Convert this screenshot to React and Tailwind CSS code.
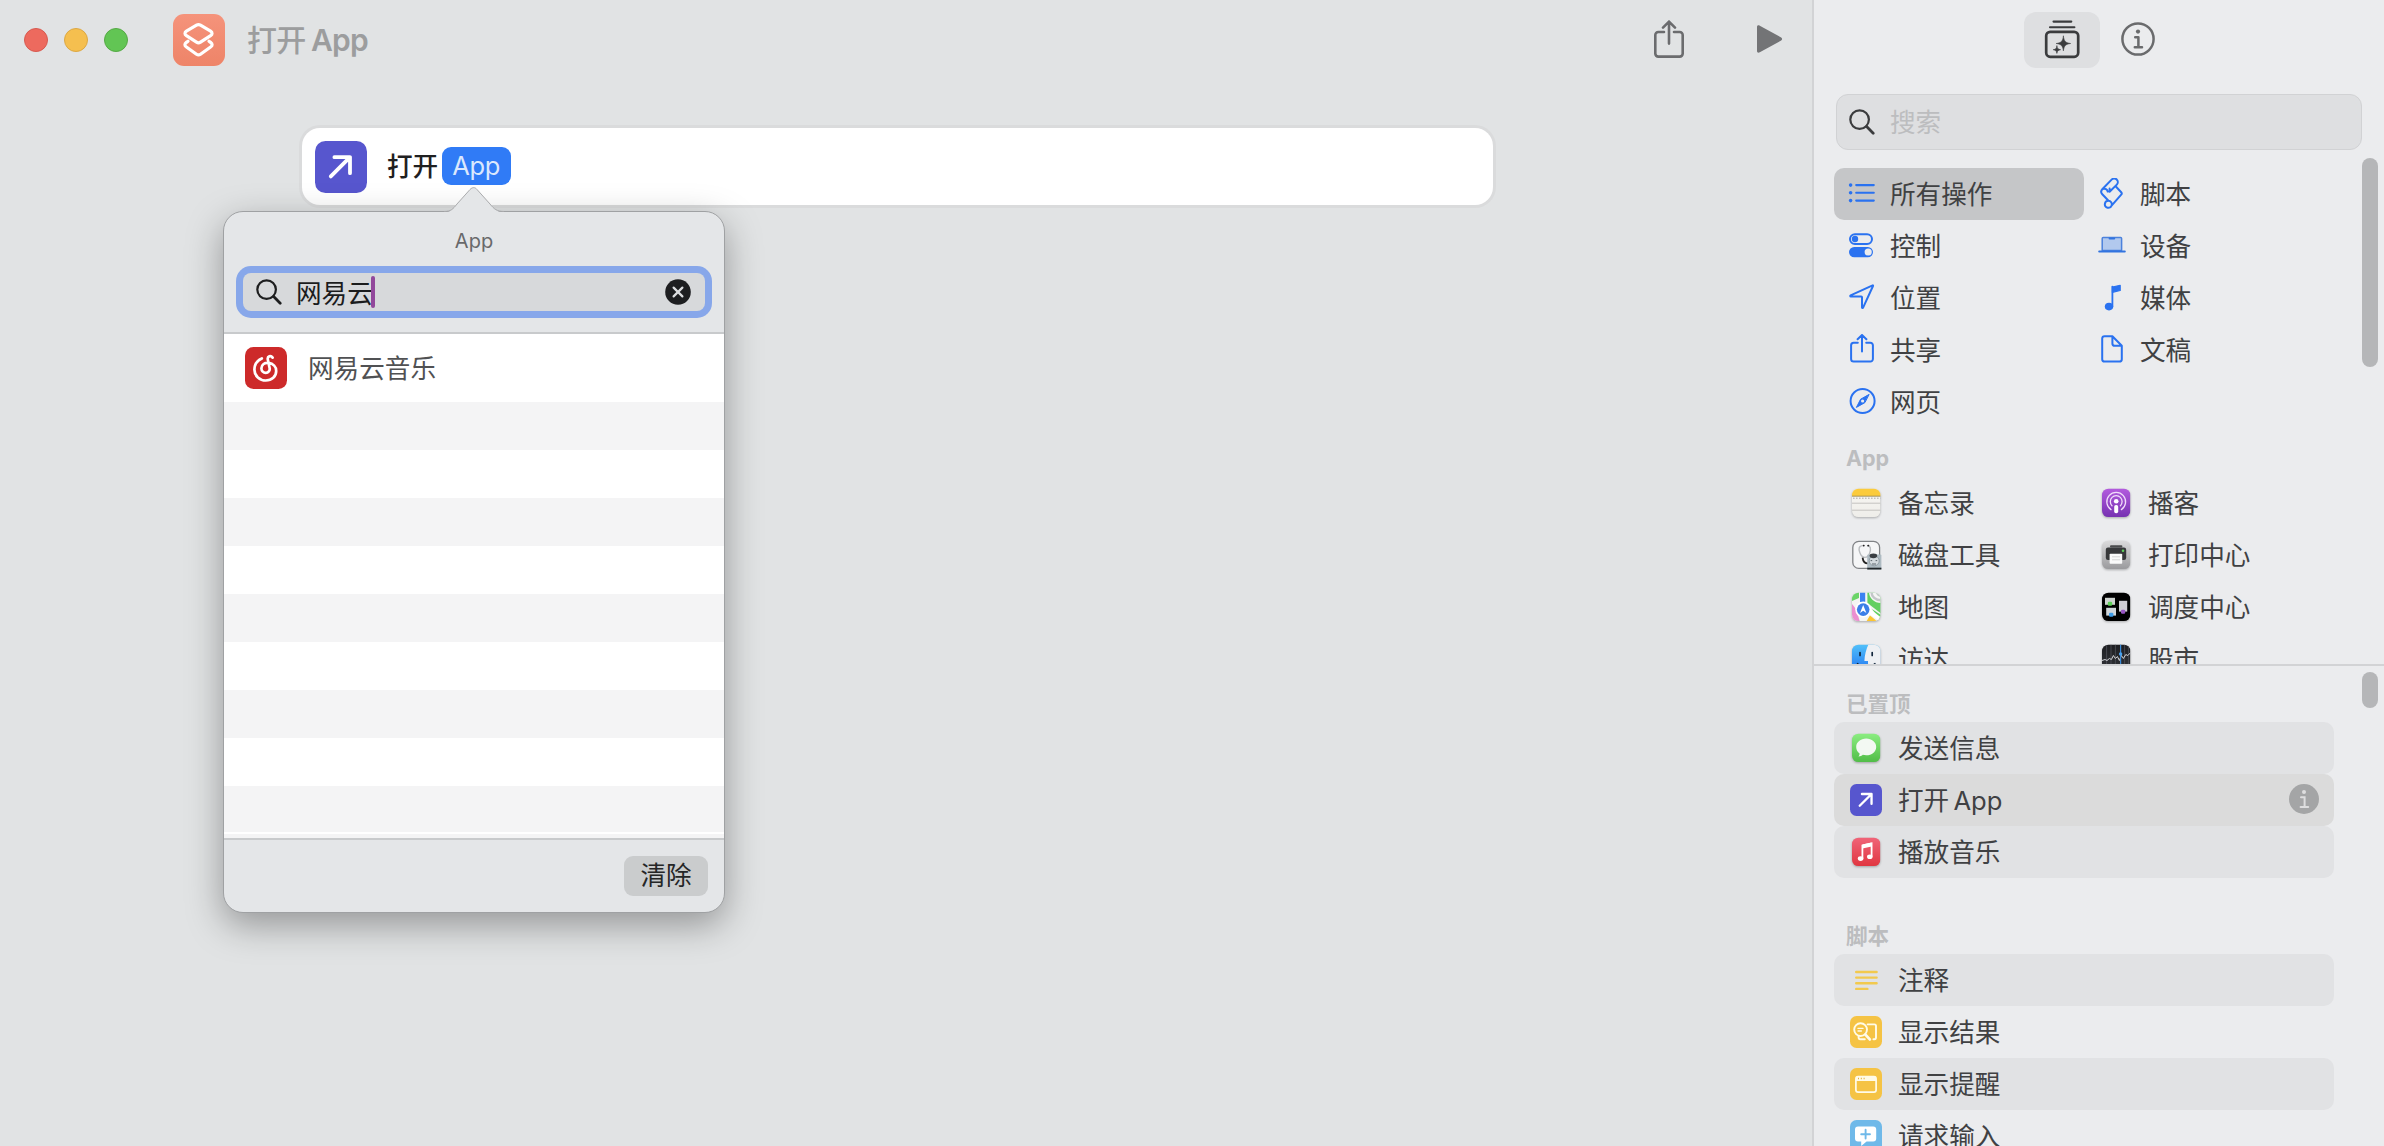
const CATEGORIES = [
  { label: '所有操作', icon: ListIcon, active: true },
  { label: '脚本', icon: ScrollIcon },
  { label: '控制', icon: SwitchesIcon },
  { label: '设备', icon: LaptopIcon },
  { label: '位置', icon: LocationIcon },
  { label: '媒体', icon: NoteIcon },
  { label: '共享', icon: ShareSmallIcon },
  { label: '文稿', icon: DocIcon },
  { label: '网页', icon: CompassIcon },
]

const APPS = [
  { label: '备忘录', icon: NotesApp },
  { label: '播客', icon: PodcastsApp },
  { label: '磁盘工具', icon: DiskApp },
  { label: '打印中心', icon: PrintApp },
  { label: '地图', icon: MapsApp },
  { label: '调度中心', icon: MissionApp },
  { label: '访达', icon: FinderApp },
  { label: '股市', icon: StocksApp },
]

const PINNED = [
  { label: '发送信息', icon: MessagesApp, row: 'bg-[#e1e2e4]' },
  { label: '打开 App', icon: OpenAppIcon, row: 'bg-[#dbdbdb]', info: true },
  { label: '播放音乐', icon: MusicApp, row: 'bg-[#e1e2e4]' },
]

const SCRIPTING = [
  { label: '注释', icon: CommentIcon, row: 'bg-[#e1e2e4]' },
  { label: '显示结果', icon: ResultIcon, row: '' },
  { label: '显示提醒', icon: AlertIcon, row: 'bg-[#e1e2e4]' },
  { label: '请求输入', icon: InputIcon, row: '' },
]

/* ---------- category icons, 32x32 ---------- */

function Glyph({ children }) {
  return (
    <svg viewBox="0 0 32 32" className="h-8 w-8 shrink-0" fill="none" stroke="#2a72f0" strokeWidth="2" strokeLinecap="round" strokeLinejoin="round">
      {children}
    </svg>
  )
}

function ListIcon() {
  return (
    <Glyph>
      <path d="M10.2 7.1h17.6M10.2 14.8h17.6M10.2 22.6h17.6" strokeWidth="2.1" />
      <g fill="#2a72f0" stroke="none">
        <circle cx="4.6" cy="7.1" r="1.8" />
        <circle cx="4.6" cy="14.8" r="1.8" />
        <circle cx="4.6" cy="22.6" r="1.8" />
      </g>
    </Glyph>
  )
}

function SwitchesIcon() {
  return (
    <Glyph>
      <rect x="4" y="4.2" width="22" height="9.8" rx="4.9" />
      <circle cx="9" cy="9" r="3.2" fill="#2a72f0" stroke="none" />
      <rect x="3" y="16.9" width="24" height="10.4" rx="5.2" fill="#2a72f0" stroke="none" />
      <circle cx="22.2" cy="22" r="3.6" fill="#ebecee" stroke="none" />
    </Glyph>
  )
}

function LocationIcon() {
  return (
    <Glyph>
      <path d="M26.6 3.4 4.6 13.4c-.6.3-.5 1 .2 1h10.4c.5 0 .8.3.8.8v10.2c0 .7.8.9 1.1.2L27 4c.2-.4 0-.8-.4-.6z" />
    </Glyph>
  )
}

function ShareSmallIcon() {
  return (
    <Glyph>
      <path d="M11.8 8.8H7.6a2.5 2.5 0 0 0-2.5 2.5v13.8a2.5 2.5 0 0 0 2.5 2.5h16.8a2.5 2.5 0 0 0 2.5-2.5V11.3a2.5 2.5 0 0 0-2.5-2.5h-4.2M16 17.6V1.2M11.6 5.2 16 1l4.4 4.2" />
    </Glyph>
  )
}

function CompassIcon() {
  return (
    <Glyph>
      <circle cx="16.6" cy="15" r="12" />
      <path d="m22.8 8.6-8.2 4.6-4.2 8.2 8.2-4.6z" fill="#2a72f0" strokeWidth="1" />
      <circle cx="16.6" cy="15" r="1.6" fill="#ebecee" stroke="none" />
    </Glyph>
  )
}

function ScrollIcon() {
  return (
    <Glyph>
      <path d="M6.5 11 15.6 1.6a3.6 3.6 0 0 1 5.2 5l-7.2 7.2v-3.2M6.5 11c-1.7 1.7-1.7 3.6-.2 5.2l6.2 6.6M6.5 11c2.6-1 5 .4 5.2 2.6M19.6 8.2l5.6 6c.8.9.8 1.6 0 2.5L15.6 27.6a3.5 3.5 0 1 1-3.2-4.8c2.4 0 4 2.3 3.2 4.8" />
    </Glyph>
  )
}

function LaptopIcon() {
  return (
    <Glyph>
      <path d="M6.2 20.6V8.6c0-.6.4-1 1-1h17.4c.6 0 1 .4 1 1v12z" fill="#b2c9ee" stroke="#4c82dc" strokeWidth="1.5" />
      <path d="M3.2 21.4h25.6" stroke="#3274e0" strokeWidth="2" />
      <path d="M13.6 8.6h4.6" stroke="#3274e0" strokeWidth="2" />
    </Glyph>
  )
}

function NoteIcon() {
  return (
    <Glyph>
      <ellipse cx="13" cy="24.6" rx="4.2" ry="3.8" fill="#2a72f0" stroke="none" />
      <path d="M16.4 24.4V4.6" strokeWidth="1.8" />
      <path d="M16.4 5 24.2 3.3v5.2l-7.8 1.8z" fill="#2a72f0" strokeWidth="1.2" />
    </Glyph>
  )
}

function DocIcon() {
  return (
    <Glyph>
      <path d="M16.4 2.2H8.6a2.4 2.4 0 0 0-2.4 2.4v20.6a2.4 2.4 0 0 0 2.4 2.4h14.8a2.4 2.4 0 0 0 2.4-2.4V11.8zM16.4 2.2v7.2a2.4 2.4 0 0 0 2.4 2.4h7" />
    </Glyph>
  )
}

/* ---------- app icons, 32x32 with a 28px body ---------- */

function AppShape({ id, from, to, children }) {
  return (
    <svg viewBox="0 0 32 32" className="h-8 w-8 shrink-0 drop-shadow-[0_1px_1px_rgba(0,0,0,0.28)]">
      <defs>
        <linearGradient id={`${id}-g`} x1="0" y1="0" x2="0" y2="1">
          <stop offset="0" stopColor={from} />
          <stop offset="1" stopColor={to} />
        </linearGradient>
        <clipPath id={`${id}-c`}>
          <rect x="2" y="1.7" width="28.4" height="28.4" rx="6.4" />
        </clipPath>
      </defs>
      <g clipPath={`url(#${id}-c)`}>
        <rect x="2" y="1" width="28.4" height="30" fill={`url(#${id}-g)`} />
        {children}
      </g>
    </svg>
  )
}

function NotesApp() {
  return (
    <AppShape id="notes" from="#f8f7f4" to="#eeede9">
      <rect x="2" y="1" width="29" height="8" fill="#fbcb3c" />
      <path d="M2 9.2h29" stroke="#9d8a4e" strokeWidth=".9" />
      <path d="M3 11.2h28" stroke="#a9a8a4" strokeWidth="1" strokeDasharray="1.6 1.4" />
      <path d="M2 16.2h29M2 23.2h29" stroke="#c4c3bf" strokeWidth="1" />
    </AppShape>
  )
}

function DiskApp() {
  return (
    <svg viewBox="0 0 32 32" className="h-8 w-8 shrink-0">
      <rect x="2.8" y="2.4" width="26.8" height="27" rx="6" fill="#f5f6f7" stroke="#808386" strokeWidth="1.3" />
      <path d="M12.6 6.6c-3.8 0-4.2 3.4-2.8 7 1 2.8 3 4.8 5 4.8s4.2-2 5-4.8c1.2-3.6 1-7-2.8-7" fill="none" stroke="#b9bcbf" strokeWidth="1.4" />
      <path d="M13.6 6.6h.2M18.2 6.6h.2" stroke="#222" strokeWidth="1.8" strokeLinecap="round" />
      <path d="M12.6 18.6c.4 3.6 2.4 6 5.8 5.8" fill="none" stroke="#222" strokeWidth="1.8" />
      <rect x="17.2" y="15.6" width="14.2" height="15" rx="1" fill="#aebbc2" />
      <circle cx="24.2" cy="21.8" r="5" fill="#d3dade" stroke="#84929a" strokeWidth=".8" />
      <ellipse cx="23.4" cy="16.8" rx="3.8" ry="2.4" fill="#3a3f43" />
      <path d="M20.6 21.6h1.6M25.6 21.6h1.6M22 25h4" stroke="#5a656c" strokeWidth="1" />
      <path d="M17.2 29.6h14.2" stroke="#20262a" strokeWidth="1.8" />
    </svg>
  )
}

function MapsApp() {
  return (
    <AppShape id="maps" from="#f4f5f3" to="#f4f5f3">
      <path d="M2 1h7v6l-7 3z" fill="#6bd468" />
      <path d="M17.4 1H31v21.5L17.4 12z" fill="#62cf61" />
      <path d="M19 1c0 6 5 11 12 11V1z" fill="#f4f5f3" />
      <path d="M21.5 1c0 4.5 4 8.3 9.5 8.3M27 1c0 2 2 3.5 4 3.5" fill="none" stroke="#c3c6c9" strokeWidth="2.4" />
      <path d="M2 13l4 5 4 13H2z" fill="#ea8fd0" />
      <path d="M16 31l4-6.500 8 6.500z" fill="#fbc531" />
      <path d="M22 18l9 6v7z" fill="#62cf61" />
      <path d="M19 17l12 9.500v4L17 22z" fill="#fff" />
      <path d="M12.6 1v12" stroke="#3b82f2" strokeWidth="5.2" />
      <circle cx="13.2" cy="18.6" r="8" fill="#fff" />
      <circle cx="13.2" cy="18.6" r="6.3" fill="#3b7fe8" />
      <path d="m13.2 14 3.2 8-3.2-2.2-3.2 2.2z" fill="#fff" />
    </AppShape>
  )
}

function FinderApp() {
  return (
    <AppShape id="finder" from="#52c2fa" to="#1f6ff0">
      <path d="M18.6 1C16 7 14.6 12 14.4 18H18c0 4 .2 8 1.4 13H31V1z" fill="#eef0f3" />
      <path d="M10 9.6v2.8M22.2 9.6v2.8" stroke="#12263c" strokeWidth="1.7" strokeLinecap="round" />
      <path d="M7.4 20.6c5 4.600 12.600 4.600 17.600 0" fill="none" stroke="#12263c" strokeWidth="1.4" strokeLinecap="round" />
    </AppShape>
  )
}

function PodcastsApp() {
  return (
    <AppShape id="podcasts" from="#b45cdf" to="#7430b0">
      <g fill="none" stroke="#f1dcfa" strokeWidth="1.3" strokeLinecap="round">
        <path d="M11 22.6a9.4 9.4 0 1 1 10.4 0" />
        <path d="M12 18.7a5.9 5.9 0 1 1 8.4 0" />
      </g>
      <circle cx="16.2" cy="14.2" r="2.3" fill="#fff" />
      <rect x="14.2" y="18" width="4" height="8.2" rx="1.8" fill="#fff" />
    </AppShape>
  )
}

function PrintApp() {
  return (
    <AppShape id="print" from="#dcdcdd" to="#98989b">
      <rect x="10" y="6.2" width="12.4" height="2.4" rx="1.1" fill="#4a4b4c" />
      <rect x="5.8" y="8.6" width="20.4" height="12.4" rx="2.2" fill="#37383a" />
      <circle cx="23" cy="11.8" r="1.3" fill="#5fce5c" />
      <rect x="9.6" y="14.8" width="12.6" height="10" rx=".8" fill="#fafafa" />
      <path d="M12 17.8h8M12 20.8h8" stroke="#d2d2d3" strokeWidth=".9" />
    </AppShape>
  )
}

function MissionApp() {
  return (
    <AppShape id="mission" from="#000" to="#000">
      <rect x="5" y="6.8" width="10" height="7" fill="#cdd2cf" />
      <rect x="7.8" y="10.8" width="4.4" height="4" rx="1.2" fill="#5ed058" />
      <rect x="6.2" y="16.8" width="9.8" height="7.8" fill="#d0d6da" />
      <rect x="9" y="21.8" width="4.4" height="4" rx="1.2" fill="#3f9de8" />
      <rect x="19" y="9.8" width="8.2" height="10.8" fill="#cfcdd3" />
      <rect x="21" y="18.8" width="4.2" height="4" rx="1.2" fill="#9856c4" />
    </AppShape>
  )
}

function StocksApp() {
  return (
    <AppShape id="stocks" from="#1c1d21" to="#34363c">
      <path d="M6.6 1v30M11 1v30M15.4 1v30M24.6 1v30M28.4 1v30" stroke="#4f5259" strokeWidth=".8" />
      <path d="m2 17.5 3-1 2 1 2.4-2 2 1 2-4 2 3 2-2 2 4 2-5 2 3 2.4-4 2 1 3-3" fill="none" stroke="#d3d5d9" strokeWidth="1" />
      <path d="M20.6 1v30" stroke="#3a8ad8" strokeWidth="1.2" />
      <circle cx="20.6" cy="11" r="1.7" fill="#4aa3f0" />
    </AppShape>
  )
}

function MessagesApp() {
  return (
    <AppShape id="messages" from="#8cee82" to="#4fbb46">
      <path d="M16.2 6.6c5.6 0 10 3.7 10 8.3s-4.4 8.3-10 8.3c-1.2 0-2.4-.2-3.4-.5-1 .9-2.5 1.6-4.3 1.7.8-.9 1.2-1.9 1.1-3-2.1-1.5-3.4-3.9-3.4-6.5 0-4.6 4.4-8.3 10-8.3z" fill="#f3f8f3" />
    </AppShape>
  )
}

function MusicApp() {
  return (
    <AppShape id="music" from="#f0657a" to="#e0353f">
      <ellipse cx="10.6" cy="22.6" rx="2.8" ry="2.3" fill="#fff" />
      <ellipse cx="19.8" cy="20.8" rx="2.8" ry="2.3" fill="#fff" />
      <path d="M12.4 22.6V9.4l9.2-2v13.4" fill="none" stroke="#fff" strokeWidth="1.8" />
      <path d="m12.4 8.6 9.2-2v4l-9.2 2z" fill="#fff" />
    </AppShape>
  )
}

function OpenAppIcon({ className = 'h-8 w-8' }) {
  return (
    <svg viewBox="0 0 52 52" className={`${className} shrink-0`}>
      <rect width="52" height="52" rx="10.5" fill="#5756ce" />
      <path d="M15.8 35.4 35 16.2M19.4 16.2H35v16" fill="none" stroke="#fff" strokeWidth="3.8" strokeLinecap="round" strokeLinejoin="round" />
    </svg>
  )
}

function CommentIcon() {
  return (
    <svg viewBox="0 0 32 32" className="h-8 w-8 shrink-0" stroke="#f2c94e" strokeWidth="2.4" strokeLinecap="round">
      <path d="M6.2 8h20.4M6.2 13.6h20.4M6.2 19.2h20.4M6.2 24.9h11.2" />
    </svg>
  )
}

function ResultIcon() {
  return (
    <svg viewBox="0 0 32 32" className="h-8 w-8 shrink-0" fill="none" stroke="#fffbe8" strokeLinecap="round" strokeLinejoin="round">
      <rect width="32" height="32" rx="6.5" fill="#f5c344" stroke="none" />
      <path d="M17.6 8.4h6.8c1 0 1.6.6 1.6 1.6v11.6c0 1-.6 1.6-1.6 1.6h-1M8.6 20v1.6c0 1 .6 1.6 1.6 1.6h4.6" strokeWidth="1.9" />
      <circle cx="10.6" cy="13.6" r="6.4" fill="#f5c344" strokeWidth="1.9" />
      <path d="m15.4 18.6 4.4 4.8" strokeWidth="2.8" />
      <path d="M8 12.4h5M8 15h3.4" strokeWidth="1.3" />
    </svg>
  )
}

function AlertIcon() {
  return (
    <svg viewBox="0 0 32 32" className="h-8 w-8 shrink-0">
      <rect width="32" height="32" rx="6.5" fill="#f5c344" />
      <rect x="5.9" y="8.5" width="20.2" height="15.6" rx="2.2" fill="none" stroke="#fffbe8" strokeWidth="1.7" />
      <path d="M6 9.5c0-.6.4-1 1-1h18c.6 0 1 .4 1 1V13H6z" fill="#fffbe8" />
      <path d="M8 10.5h1M10.8 10.5h1M13.6 10.5h1" stroke="#e3b23c" strokeWidth="1.3" />
    </svg>
  )
}

function InputIcon() {
  return (
    <svg viewBox="0 0 32 32" className="h-8 w-8 shrink-0">
      <rect width="32" height="32" rx="6.5" fill="#6fb9e9" />
      <path d="M8 6.4h15.2a3 3 0 0 1 3 3v9.2a3 3 0 0 1-3 3h-6.6L11.2 26v-4.4H8a3 3 0 0 1-3-3V9.4a3 3 0 0 1 3-3z" fill="#fff" />
      <path d="M15.6 9.8v8.8M11.2 14.2H20" stroke="#6fb9e9" strokeWidth="1.9" strokeLinecap="round" />
    </svg>
  )
}

function SearchIcon({ className }) {
  return (
    <svg viewBox="0 0 26 26" className={`h-[26px] w-[26px] shrink-0 ${className}`} fill="none" stroke="currentColor" strokeLinecap="round">
      <circle cx="10.6" cy="10.6" r="9.3" strokeWidth="2.2" />
      <path d="m17.6 17.6 6.6 6.6" strokeWidth="2.8" />
    </svg>
  )
}

/* ---------- main window ---------- */

function ShortcutIcon() {
  return (
    <svg viewBox="0 0 52 52" className="h-[52px] w-[52px]">
      <defs>
        <linearGradient id="shortcut" x1="0" y1="0" x2="0" y2="1">
          <stop offset="0" stopColor="#f5937b" />
          <stop offset="1" stopColor="#ee8468" />
        </linearGradient>
      </defs>
      <rect width="52" height="52" rx="11" fill="url(#shortcut)" />
      <g fill="none" stroke="#fff" strokeWidth="3.2" strokeLinejoin="round" strokeLinecap="round">
        <path d="M27.5 11.2 37.6 17.2c1.9 1.2 1.9 3.2 0 4.4l-10.1 6.6c-1.4.9-2.6.9-4 0l-10.1-6.6c-1.9-1.2-1.9-3.2 0-4.4l10.1-6c1.4-.8 2.6-.8 4 0z" />
        <path d="m15 27.2-1.6 1.2c-2 1.5-2 3.3 0 4.6l10.1 7.2c1.4 1 2.6 1 4 0L37.6 33c2-1.3 2-3.1 0-4.6L36 27.2" />
      </g>
    </svg>
  )
}

function NeteaseIcon() {
  return (
    <svg viewBox="0 0 42 42" className="h-[42px] w-[42px] shrink-0">
      <rect width="42" height="42" rx="8.5" fill="#cd2a2a" />
      <path d="M27.6 10.6c-1.8-2.4-5.4-1.4-4.800 1.800l1.800 8.600c.6 2.600-1.400 4.800-3.800 4.800s-4.400-1.900-4.400-4.500c0-3.700 3.400-6 7.200-5.400 4.600.7 7.600 4 7.600 8 0 5.600-4.400 9.600-10.400 9.600S9.400 29 9.400 22.800c0-5 2.800-9.400 7.400-11.400" fill="none" stroke="#fff" strokeWidth="2.7" strokeLinecap="round" />
    </svg>
  )
}

function Toolbar() {
  return (
    <header className="flex h-20 items-center pr-[29px] pl-6">
      <div className="flex gap-4">
        <span className="h-6 w-6 rounded-full border border-[#d75a50] bg-[#ed6a5e]" />
        <span className="h-6 w-6 rounded-full border border-[#dca844] bg-[#f5bf4f]" />
        <span className="h-6 w-6 rounded-full border border-[#55a945] bg-[#62c554]" />
      </div>
      <div className="ml-[45px]"><ShortcutIcon /></div>
      <h1 className="ml-[22px] flex-1 text-[30px] font-medium tracking-[-0.7px] text-[#9c9d9e]">打开 <span className="-ml-0.5 font-semibold">App</span></h1>
      <svg viewBox="0 0 30 38" className="mb-[3px] h-[38px] w-[30px]" fill="none" stroke="#6b6c6e" strokeWidth="2.6" strokeLinecap="round" strokeLinejoin="round">
        <path d="M10 12H4.3a3 3 0 0 0-3 3v18.6a3 3 0 0 0 3 3h21.4a3 3 0 0 0 3-3V15a3 3 0 0 0-3-3H20M15 23.6V1.6M9 7.6l6-6 6 6" />
      </svg>
      <svg viewBox="0 0 26 28" className="mb-[2px] ml-[73px] h-7 w-[26px]">
        <path d="M0 2C0 .4 1.4-.1 2.8.8l21.4 11.7c1.2.8 1.2 2.2 0 3L2.8 27.2C1.4 28.1 0 27.6 0 26z" fill="#737476" />
      </svg>
    </header>
  )
}

function Popover() {
  return (
    <div className="absolute top-[211px] left-[223px] h-[702px] w-[502px] rounded-[20px] border border-[#9fa1a3] bg-[#e4e6e8] shadow-[0_12px_36px_rgba(0,0,0,0.34)]">
      <svg viewBox="0 0 60 26" className="absolute -top-[25px] left-[220px] h-[26px] w-[60px]">
        <path d="M0 26v-.5C7 25 9 22 13 17L26 2.5c2.5-2.5 5-2.5 7 0L46 17c4 5 7 8 14 8.5v.5z" fill="#e4e6e8" />
        <path d="M0 24.5C7 24.5 9 22 13 17L26 2.5c2.5-2.5 5-2.5 7 0L46 17c4 5 7 7.5 14 7.5" fill="none" stroke="#aaabad" />
      </svg>
      <div className="flex h-full flex-col overflow-hidden rounded-[19px]">
        <div className="flex h-[120px] shrink-0 flex-col items-center">
          <div className="mt-[14px] text-[20px] leading-[30px] text-[#68696b]">App</div>
          <div className="mt-[17px] flex h-[38px] w-[462px] items-center rounded-[8px] bg-[#d7d9db] pr-[14px] pl-[13px] ring-7 ring-[#87a7ea]">
            <SearchIcon className="text-[#1d1e1f]" />
            <span className="mt-[3px] ml-[14px] text-[25.6px] leading-none text-[#1b1c1d]">网易云</span>
            <span className="-ml-[2px] h-8 w-1 rounded-full bg-[#92489b]" />
            <svg viewBox="0 0 26 26" className="ml-auto h-[26px] w-[26px]">
              <circle cx="13" cy="13" r="12.8" fill="#1d1e20" />
              <path d="m8.6 8.6 8.8 8.8M17.4 8.6l-8.8 8.8" stroke="#dcdee0" strokeWidth="2.2" strokeLinecap="round" />
            </svg>
          </div>
        </div>
        <div className="flex min-h-0 flex-1 flex-col overflow-hidden border-y-2 border-[#c8cacc] bg-white">
          <div className="flex h-[68px] shrink-0 items-center pl-[21px]">
            <NeteaseIcon />
            <span className="mt-[3px] ml-[21px] text-[25.6px] text-[#505153]">网易云音乐</span>
          </div>
          <div className="flex flex-col gap-12 bg-white">
            {Array.from({ length: 4 }, (_, i) => (
              <div key={i} className="h-12 bg-[#f4f4f5]" />
            ))}
          </div>
          <div className="mt-12 h-[46px] shrink-0 bg-[#f4f4f5]" />
          <div className="mt-0.5 h-1 shrink-0 bg-[#f4f4f5]" />
        </div>
        <div className="flex h-[72px] shrink-0 items-center justify-end pr-4">
          <button className="h-10 w-[84px] rounded-[9px] bg-[#cacccd] text-[25.6px] leading-none text-[#252627]">清除</button>
        </div>
      </div>
    </div>
  )
}

function Editor() {
  return (
    <main className="relative w-[1812px] shrink-0 bg-[#e1e3e4]">
      <Toolbar />
      <div className="mt-[48px] ml-[302px] flex h-[77px] w-[1191px] items-center rounded-[18px] bg-white pl-[13px] ring-3 ring-[#dadbdc]">
        <OpenAppIcon className="h-[52px] w-[52px]" />
        <span className="mt-[2px] ml-[20px] text-[25.6px] font-medium text-[#1f2021]">打开</span>
        <span className="mb-px ml-[4px] flex h-[38px] w-[69px] items-center justify-center rounded-[9px] bg-[#307bf6] pr-px text-[25.5px] tracking-[-0.3px] text-[#dbe8fd]">App</span>
      </div>
      <Popover />
    </main>
  )
}

/* ---------- sidebar ---------- */

function SidebarTabs() {
  return (
    <div className="flex h-[68px] items-start pt-3 pl-[210px]">
      <div className="flex h-14 w-[76px] items-center justify-center rounded-xl bg-[#dedfe1]">
        <svg viewBox="0 0 36 40" className="mb-[2px] h-10 w-9" fill="none" stroke="#3b3c3e" strokeLinecap="round" strokeLinejoin="round">
          <path d="M9.5 2.6h17.8M6 8.2h24.4" strokeWidth="2.1" />
          <rect x="2.2" y="12.8" width="32" height="25" rx="4" strokeWidth="2.7" />
          <path d="M19.4 17.2c.6 5 2.2 6.7 7.2 7.3-5 .6-6.6 2.3-7.2 7.3-.6-5-2.2-6.7-7.2-7.3 5-.6 6.6-2.3 7.2-7.3zM12.9 27c.4 2.6 1.2 3.3 3.7 3.7-2.5.4-3.3 1.2-3.7 3.7-.4-2.5-1.2-3.3-3.7-3.7 2.5-.4 3.3-1.1 3.7-3.7z" fill="#3b3c3e" strokeWidth=".6" />
        </svg>
      </div>
      <svg viewBox="0 0 34 34" className="mt-[10px] ml-[21px] h-[34px] w-[34px]" fill="none" stroke="#6a6b6d">
        <circle cx="17" cy="17" r="15.6" strokeWidth="2.5" />
        <circle cx="17" cy="9.6" r="2.1" fill="#6a6b6d" stroke="none" />
        <path d="M14.2 15.2h3.2v9.6M13.8 25.2h7.2" strokeWidth="2.5" strokeLinecap="round" strokeLinejoin="round" />
      </svg>
    </div>
  )
}

function ActionRow({ item }) {
  const Icon = item.icon
  return (
    <div className={`flex h-[52px] w-[500px] items-center rounded-[10px] pr-[15px] pl-4 ${item.row}`}>
      <Icon />
      <span className="mt-[3px] ml-4 flex-1 text-[25.6px] [word-spacing:-3px]">{item.label}</span>
      {item.info && (
        <svg viewBox="0 0 30 30" className="mb-[2px] h-[30px] w-[30px]">
          <circle cx="15" cy="15" r="15" fill="#a4a5a6" />
          <circle cx="15" cy="8" r="2" fill="#dededf" />
          <path d="M12 13.2h3.6v9M11.6 23h7.6" fill="none" stroke="#dededf" strokeWidth="2" strokeLinecap="round" />
        </svg>
      )}
    </div>
  )
}

function SectionLabel({ children, className }) {
  return <div className={`pl-3 text-[21.5px] leading-8 font-bold text-[#bcbdbf] ${className}`}>{children}</div>
}

function Sidebar() {
  return (
    <aside className="flex h-full flex-1 flex-col border-l-2 border-[#d2d3d5] bg-[#ebecee] text-[#404143]">
      <SidebarTabs />
      <div className="mt-[26px] ml-[22px] flex h-14 w-[526px] shrink-0 items-center rounded-xl border border-[#d1d2d4] bg-[#dedfe1] pl-[12px]">
        <SearchIcon className="text-[#3b3c3e]" />
        <span className="mt-[3px] ml-[15px] text-[25.6px] text-[#bcbdbf]">搜索</span>
      </div>

      <div className="flex h-[516px] shrink-0 justify-between overflow-hidden border-b-2 border-[#d2d3d5] pr-1.5 pl-5">
        <div className="w-[500px] pt-[18px]">
          <div className="grid grid-cols-2">
            {CATEGORIES.map(({ label, icon: Icon, active }) => (
              <div key={label} className={`flex h-[52px] items-center rounded-[10px] pl-3 ${active ? 'bg-[#c5c6c8]' : ''}`}>
                <Icon />
                <span className="mt-[3px] ml-3 text-[25.6px]">{label}</span>
              </div>
            ))}
          </div>
          <SectionLabel className="mt-[14px] mb-[3px]">App</SectionLabel>
          <div className="grid grid-cols-2">
            {APPS.map(({ label, icon: Icon }) => (
              <div key={label} className="flex h-[52px] items-center pl-4">
                <Icon />
                <span className="mt-[2px] ml-4 text-[25.6px]">{label}</span>
              </div>
            ))}
          </div>
        </div>
        <div className="mt-2 h-[209px] w-4 rounded-full bg-[#b5b6b8]" />
      </div>

      <div className="flex min-h-0 flex-1 justify-between overflow-hidden pr-1.5 pl-5">
        <div className="w-[500px] pt-[22px]">
          <SectionLabel className="mb-[2px]">已置顶</SectionLabel>
          {PINNED.map(item => <ActionRow key={item.label} item={item} />)}
          <SectionLabel className="mt-[42px] mb-[2px]">脚本</SectionLabel>
          {SCRIPTING.map(item => <ActionRow key={item.label} item={item} />)}
        </div>
        <div className="mt-1.5 h-9 w-4 rounded-full bg-[#b5b6b8]" />
      </div>
    </aside>
  )
}

export default function App() {
  return (
    <div className="flex h-screen w-full overflow-hidden bg-[#e1e3e4] font-[Inter,'Noto_Sans_CJK_SC',sans-serif]">
      <Editor />
      <Sidebar />
    </div>
  )
}
